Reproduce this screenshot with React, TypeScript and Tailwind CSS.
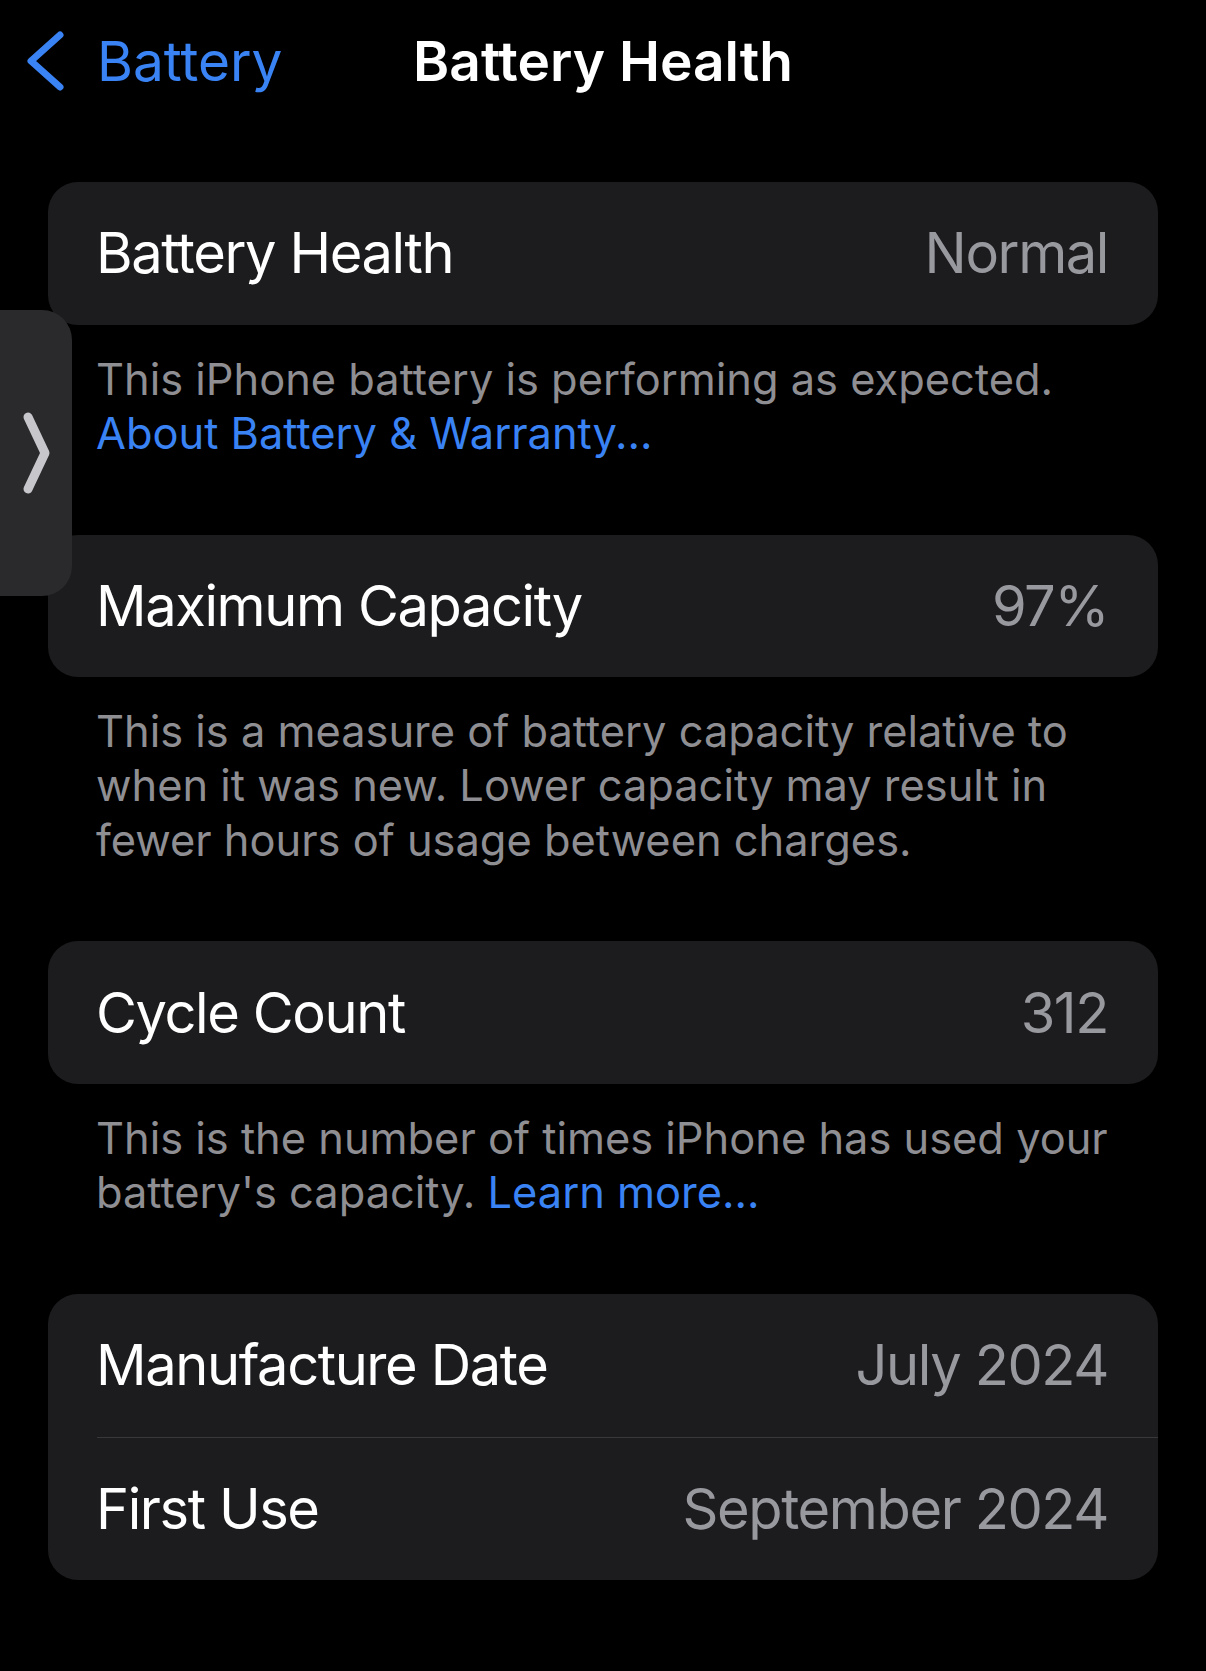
import React from "react"

const FONT = 'Inter, "Noto Sans", "Liberation Sans", sans-serif'

type Row = { label: string; value: string }

function Card({ rows }: { rows: Row[] }) {
  return (
    <div className="rounded-[30px] bg-[#1c1c1e] overflow-hidden">
      {rows.map((r, i) => (
        <div key={r.label}>
          {i > 0 && <div className="ml-[49px] h-px bg-[#38383a]" />}
          <div className="flex h-[142.5px] items-center justify-between pl-[48px] pr-[50px] text-[56px] tracking-[-0.025em]">
            <span className="text-white">{r.label}</span>
            <span className="text-[#98989f]">{r.value}</span>
          </div>
        </div>
      ))}
    </div>
  )
}

function Footer({ children }: { children: React.ReactNode }) {
  return (
    <p className="pl-[48px] pr-[30px] pt-[27px] pb-[74.5px] text-[43.4px] leading-[54.3px] text-[#8e8e93]">
      {children}
    </p>
  )
}

export default function App() {
  return (
    <div className="relative min-h-[1671px] w-full bg-black" style={{ fontFamily: FONT }}>
      {/* nav bar */}
      <div className="grid h-[122px] grid-cols-[1fr_auto_1fr] items-center">
        <div className="flex items-center pl-[27px]">
          <svg width="40" height="64" viewBox="0 0 40 64" fill="none" className="mr-[30px]">
            <path d="M33 6 L4 32 L33 58" stroke="#3a83f5" strokeWidth="7" strokeLinecap="round" strokeLinejoin="round" />
          </svg>
          <span className="text-[55px] text-[#3a83f5]">Battery</span>
        </div>
        <h1 className="text-[55px] font-semibold text-white">Battery Health</h1>
        <div />
      </div>

      <div className="px-[48px] pt-[60px]">
        <Card rows={[{ label: "Battery Health", value: "Normal" }]} />
        <Footer>
          This iPhone battery is performing as expected.
          <br />
          <span className="text-[#3a83f5]">About Battery &amp; Warranty...</span>
        </Footer>

        <Card rows={[{ label: "Maximum Capacity", value: "97%" }]} />
        <Footer>
          This is a measure of battery capacity relative to when it was new. Lower capacity may result in fewer hours of
          usage between charges.
        </Footer>

        <Card rows={[{ label: "Cycle Count", value: "312" }]} />
        <Footer>
          This is the number of times iPhone has used your battery's capacity.{" "}
          <span className="text-[#3a83f5]">Learn more...</span>
        </Footer>

        <Card
          rows={[
            { label: "Manufacture Date", value: "July 2024" },
            { label: "First Use", value: "September 2024" },
          ]}
        />
      </div>

      {/* side tab overlay */}
      <div className="absolute left-0 top-[310px] flex h-[286px] w-[72px] items-center rounded-r-[30px] bg-[#2a2a2c]">
        <svg width="72" height="286" viewBox="0 0 72 286" fill="none">
          <path d="M28 107 L45 143 L28 179" stroke="#c6c6cb" strokeWidth="9" strokeLinecap="round" strokeLinejoin="round" />
        </svg>
      </div>
    </div>
  )
}
